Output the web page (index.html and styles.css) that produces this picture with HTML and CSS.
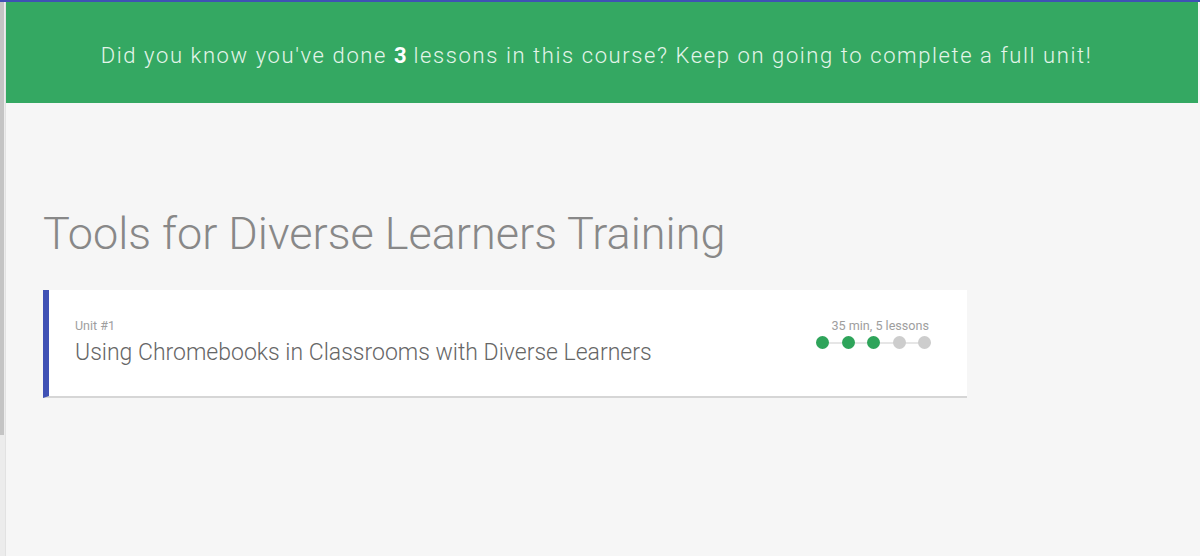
FILE: index.html
```html
<!DOCTYPE html>
<html lang="en">
<head>
  <meta charset="UTF-8">
  <meta name="viewport" content="width=device-width, initial-scale=1.0">
  <title>Tools for Diverse Learners Training</title>
  <link rel="stylesheet" href="styles.css">
</head>
<body>
  <div class="top-line"></div>
  <div class="layout">
    <!-- left rail -->
    <div class="rail">
      <div class="rail-thumb"></div>
    </div>

    <div class="page">
      <!-- Progress banner -->
      <div class="banner">
        <p>Did you know you've done <strong>3</strong> lessons in this course? Keep on going to complete a full unit!</p>
      </div>

      <main>
        <h1 class="course-title">Tools for Diverse Learners Training</h1>

        <!-- Unit card -->
        <div class="unit-card">
          <div class="unit-info">
            <div class="unit-label">Unit #1</div>
            <div class="unit-name">Using Chromebooks in Classrooms with Diverse Learners</div>
          </div>
          <div class="unit-meta">
            <div class="unit-time">35 min, 5 lessons</div>
            <div class="dots">
              <span class="dot done"></span>
              <span class="dot done"></span>
              <span class="dot done"></span>
              <span class="dot"></span>
              <span class="dot"></span>
            </div>
          </div>
        </div>
      </main>
    </div>
  </div>
</body>
</html>
```
FILE: styles.css
```css
/* General Styles */
html, body {
  height: 100%;
}

body {
  font-family: Roboto, "Noto Sans", Arial, sans-serif;
  margin: 0;
  padding: 0;
  background-color: #f6f6f6;
  color: #333;
  overflow: hidden;
}

.top-line {
  height: 2px;
  background-color: #3f51b5;
}

.layout {
  display: flex;
  height: calc(100% - 2px);
}

/* Left rail */
.rail {
  width: 5px;
  background-color: #ececec;
  border-right: 1px solid #e2e2e2;
}

.rail-thumb {
  width: 4px;
  height: 433px;
  background-color: #c4c4c4;
}

.page {
  flex: 1;
}

/* Banner */
.banner {
  background-color: #34a862;
  height: 95px;
  padding: 6px 11px 0 0;
  margin-right: 2px;
  display: flex;
  align-items: center;
  justify-content: center;
}

.banner p {
  margin: 0;
  font-size: 22px;
  font-weight: 300;
  letter-spacing: 1.6px;
  color: #e4f5ea;
}

.banner strong {
  font-weight: 700;
  letter-spacing: 0;
  color: #fff;
}

main {
  padding: 104px 0 0 37px;
}

.course-title {
  font-size: 45px;
  font-weight: 300;
  color: #888;
  margin: 0 0 30px;
}

/* Unit card */
.unit-card {
  width: 854px;
  background-color: #fff;
  border-left: 6px solid #3f51b5;
  border-bottom: 2px solid #d6d6d6;
  padding: 28px 38px 30px 26px;
  display: flex;
  justify-content: space-between;
}

.unit-label {
  font-size: 12.5px;
  color: #9e9e9e;
}

.unit-name {
  font-size: 23px;
  font-weight: 300;
  color: #666;
  margin-top: 6px;
}

.unit-meta {
  display: flex;
  flex-direction: column;
  align-items: flex-end;
}

.unit-time {
  font-size: 12.6px;
  color: #9e9e9e;
}

.dots {
  display: flex;
  gap: 12.5px;
  margin: 3px -2px 0 0;
  background: linear-gradient(#e6e6e6, #e6e6e6) center / 100% 2px no-repeat;
}

.dot {
  width: 13px;
  height: 13px;
  border-radius: 50%;
  background-color: #cdcdcd;
}

.dot.done {
  background-color: #2ea45a;
}
```
